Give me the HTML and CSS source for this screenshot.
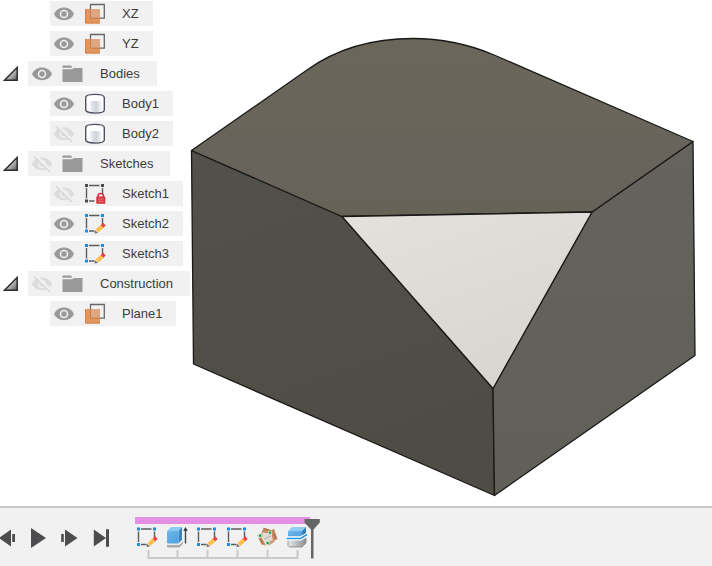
FILE: index.html
```html
<!DOCTYPE html>
<html lang="en">
<head>
<meta charset="utf-8">
<meta name="viewport" content="width=device-width, initial-scale=1">
<title>Model</title>
<link rel="stylesheet" href="styles.css">
</head>
<body>
<svg class="defs" width="0" height="0" aria-hidden="true">
  <defs>
    <linearGradient id="g-tri" x1="0" y1="0" x2="1" y2="1">
      <stop offset="0.3" stop-color="#f0f0f0"/><stop offset="1" stop-color="#555"/>
    </linearGradient>
    <linearGradient id="g-cyl">
      <stop offset="0" stop-color="#eef0f3"/><stop offset="0.5" stop-color="#cdd2da"/><stop offset="1" stop-color="#fbfbfc"/>
    </linearGradient>
    <linearGradient id="g-blue" x1="0" y1="0" x2="1" y2="1">
      <stop offset="0" stop-color="#6fb8ea"/><stop offset="1" stop-color="#4d9fdc"/>
    </linearGradient>
    <linearGradient id="g-steel">
      <stop offset="0" stop-color="#e6e7e8"/><stop offset="1" stop-color="#8d9194"/>
    </linearGradient>
    <symbol id="tri" viewBox="0 0 16 16">
      <path d="M1.500 14.200 14.200 1.500V14.200Z" fill="url(#g-tri)" stroke="#2c2c2c" stroke-width="1.500"/>
    </symbol>
    <symbol id="eye" viewBox="0 0 20 21">
      <path d="M0 11C2 6.800 5.500 4.500 10 4.500S18 6.800 20 11C18 15.200 14.500 17.200 10 17.200S2 15.200 0 11Z" fill="#999"/>
      <circle cx="10" cy="11" r="4.300" fill="#f0f0f0"/><circle cx="10" cy="11" r="2.700" fill="#999"/>
    </symbol>
    <symbol id="eye-off" viewBox="0 0 20 21">
      <path d="M0 11C2 6.800 5.500 4.500 10 4.500S18 6.800 20 11C18 15.200 14.500 17.200 10 17.200S2 15.200 0 11Z" fill="#dcdcdc"/>
      <circle cx="10" cy="11" r="4.300" fill="#f0f0f0"/><circle cx="10" cy="11" r="2.500" fill="#dcdcdc"/>
      <path d="M3.500 2.500 19.500 18" stroke="#f0f0f0" stroke-width="2.500"/>
      <path d="M2 3.500 18 19" stroke="#d8d8d8" stroke-width="1.700"/>
    </symbol>
    <symbol id="folder" viewBox="0 0 22 21">
      <path d="M0.500 2.500H9L10.500 4.800H0.500ZM0.500 6.300H10L12 5H20.500V19H0.500Z" fill="#999"/>
    </symbol>
    <symbol id="plane" viewBox="0 0 22 21">
      <path d="M1 6H16V20.500H1Z" fill="#e3955e"/>
      <path d="M1.500 6V20H15.500" fill="none" stroke="#cf8149"/>
      <path d="M7 6H16V15H7Z" fill="#dfa682"/>
      <path d="M6.500 6V1.500H20.300V15.200H16" fill="none" stroke="#666" stroke-width="1.300"/>
      <path d="M6.500 6V15.200H16" fill="none" stroke="#bd7748" stroke-width="0.800"/>
    </symbol>
    <symbol id="body" viewBox="0 0 22 21">
      <path d="M1.700 4.500C1.700 0.300 20.300 0.300 20.300 4.500V17C20.300 21 1.700 21 1.700 17Z" fill="#fff" stroke="#4c525f" stroke-width="1.400"/>
      <path d="M6 8H18V18.600Q12 19.600 6 18.800Z" fill="url(#g-cyl)"/>
    </symbol>
    <symbol id="frame" viewBox="0 0 22 21">
      <path d="M5 2.500H15.500M2.500 5V15.500M5 18H10.500M18.500 5V11" fill="none" stroke="#5c5c5c" stroke-width="1.400"/>
    </symbol>
    <symbol id="sketch" viewBox="0 0 22 21">
      <use href="#frame" width="22" height="21"/>
      <path d="M1 1H4V4H1ZM17 1H20V4H17ZM1 16.500H4V19.500H1Z" fill="#168ee8"/>
      <path d="M13 18 18.200 13.200" stroke="#fbbf4c" stroke-width="4.200"/>
      <path d="M18 13.400 20.500 11.100" stroke="#f23c48" stroke-width="3.600"/>
      <path d="M10.400 20.600 11.200 17.200 14 20Z" fill="#747474"/>
    </symbol>
    <symbol id="sketch-lock" viewBox="0 0 22 21">
      <use href="#frame" width="22" height="21"/>
      <path d="M1 1H4V4H1ZM17 1H20V4H17ZM1 16.500H4V19.500H1Z" fill="#4a4a4a"/>
      <path d="M14.200 14V12.500C14.200 9.800 19.400 9.800 19.400 12.500V14" fill="none" stroke="#d2333d" stroke-width="1.700"/>
      <rect x="12.300" y="13.400" width="9" height="7.400" rx="0.600" fill="#d2333d"/>
      <path d="M14 16H19.700M14 18.300H19.700" stroke="#e98186"/>
    </symbol>
    <symbol id="extrude" viewBox="0 0 22 22">
      <path d="M1 18.500H13L17 15V17.500L13.500 21.500H1Z" fill="#aaa"/><path d="M1.500 18.500H13.500L16.500 15.500" stroke="#eee" fill="none"/>
      <path d="M1 5 5 1H16L12.500 5Z" fill="#8bcaf2"/>
      <path d="M12.500 5 16 1V13.500L12.500 17.500Z" fill="#3985bf"/>
      <rect x="1" y="5" width="11.500" height="12.500" rx="1" fill="url(#g-blue)"/>
      <path d="M19.500 17.500V3" stroke="#444" stroke-width="1.400"/><path d="M17.300 4.800 19.500 1 21.700 4.800Z" fill="#333"/>
    </symbol>
    <symbol id="pattern" viewBox="0 0 22 22">
      <path d="M5.500 6.500 7.500 1.500 16.500 4.500 15 8ZM15.500 4.500 18 2.500 21.500 13 16.500 15.500ZM1 9.500 6 7 8.500 10 4 12ZM2.500 12.500 5.500 11 10 19.500 5.500 18.500Z" fill="#c98b62"/>
      <path d="M8 2.500 17 5.500M17 7 20 13M4 13 7 18" stroke="#9d6541"/>
      <path d="M6 9 15 7 17 14.500 9 17Z" fill="#ddd9d3"/><path d="M8 13 15 10" stroke="#b9b3ac"/>
      <path d="M10 16.500 17 14 19 15.500 13 19.500Z" fill="#d29a74"/>
      <path d="M2.500 8H5.700V11.200H2.500ZM12.500 5H15.700V8.200H12.500ZM10 15.500H13.200V18.700H10Z" fill="#16a34a" stroke="#e8f3e8" stroke-width="0.700"/>
    </symbol>
    <symbol id="split" viewBox="0 0 22 22">
      <path d="M2 12H15L20 9V17L16 21H3.500L2 19.500Z" fill="url(#g-steel)" stroke="#777" stroke-width="0.700"/>
      <path d="M2 5 6 1H20L16 5Z" fill="#91cdf2"/>
      <path d="M16 5 20 1V8L16 11Z" fill="#347fb7"/>
      <path d="M2 5H16V10.500H2Z" fill="url(#g-blue)"/>
      <path d="M0 12.500H14.500L21.500 8.500" fill="none" stroke="#fff" stroke-width="4"/>
      <path d="M0.500 12.500H14.500L21 8.500" fill="none" stroke="#2297e8" stroke-width="1.500"/>
    </symbol>
  </defs>
</svg>

<main class="workspace">
  <nav class="browser" aria-label="Browser">
    <ul class="tree">
      <li class="row child"><div class="item"><button aria-label="Toggle XZ"><svg class="eye"><use href="#eye"/></svg></button><svg class="icon"><use href="#plane"/></svg><span>XZ</span></div></li>
      <li class="row child"><div class="item"><button aria-label="Toggle YZ"><svg class="eye"><use href="#eye"/></svg></button><svg class="icon"><use href="#plane"/></svg><span>YZ</span></div></li>
      <li class="row"><button class="expander" aria-label="Collapse Bodies"><svg class="tri"><use href="#tri"/></svg></button><div class="item group"><button aria-label="Toggle Bodies"><svg class="eye"><use href="#eye"/></svg></button><svg class="icon"><use href="#folder"/></svg><span>Bodies</span></div></li>
      <li class="row child"><div class="item"><button aria-label="Toggle Body1"><svg class="eye"><use href="#eye"/></svg></button><svg class="icon"><use href="#body"/></svg><span>Body1</span></div></li>
      <li class="row child"><div class="item"><button aria-label="Toggle Body2"><svg class="eye"><use href="#eye-off"/></svg></button><svg class="icon"><use href="#body"/></svg><span>Body2</span></div></li>
      <li class="row"><button class="expander" aria-label="Collapse Sketches"><svg class="tri"><use href="#tri"/></svg></button><div class="item group"><button aria-label="Toggle Sketches"><svg class="eye"><use href="#eye-off"/></svg></button><svg class="icon"><use href="#folder"/></svg><span>Sketches</span></div></li>
      <li class="row child"><div class="item"><button aria-label="Toggle Sketch1"><svg class="eye"><use href="#eye-off"/></svg></button><svg class="icon"><use href="#sketch-lock"/></svg><span>Sketch1</span></div></li>
      <li class="row child"><div class="item"><button aria-label="Toggle Sketch2"><svg class="eye"><use href="#eye"/></svg></button><svg class="icon"><use href="#sketch"/></svg><span>Sketch2</span></div></li>
      <li class="row child"><div class="item"><button aria-label="Toggle Sketch3"><svg class="eye"><use href="#eye"/></svg></button><svg class="icon"><use href="#sketch"/></svg><span>Sketch3</span></div></li>
      <li class="row"><button class="expander" aria-label="Collapse Construction"><svg class="tri"><use href="#tri"/></svg></button><div class="item group"><button aria-label="Toggle Construction"><svg class="eye"><use href="#eye-off"/></svg></button><svg class="icon"><use href="#folder"/></svg><span>Construction</span></div></li>
      <li class="row child"><div class="item"><button aria-label="Toggle Plane1"><svg class="eye"><use href="#eye"/></svg></button><svg class="icon"><use href="#plane"/></svg><span>Plane1</span></div></li>
    </ul>
  </nav>
  <svg class="model" viewBox="190 0 522 506" preserveAspectRatio="xMinYMin meet" role="img" aria-label="Solid body with a chamfered corner">
    <defs>
      <linearGradient id="m-top" x1="0" y1="0" x2="0" y2="1">
        <stop offset="0" stop-color="#6a665a"/><stop offset="0.480" stop-color="#69655a"/><stop offset="0.600" stop-color="#68635b"/><stop offset="0.900" stop-color="#68635a"/><stop offset="1" stop-color="#676255"/>
      </linearGradient>
      <linearGradient id="m-left" x1="0" y1="0" x2="0.300" y2="1">
        <stop offset="0" stop-color="#51504a"/><stop offset="0.700" stop-color="#504e47"/><stop offset="0.850" stop-color="#504c46"/><stop offset="1" stop-color="#4e4c45"/>
      </linearGradient>
      <linearGradient id="m-right" x1="0" y1="0" x2="0" y2="1">
        <stop offset="0" stop-color="#64635d"/><stop offset="1" stop-color="#605f58"/>
      </linearGradient>
      <linearGradient id="m-cut" x1="0" y1="0" x2="0.500" y2="1">
        <stop offset="0" stop-color="#e4e1dd"/><stop offset="1" stop-color="#d8d6d1"/>
      </linearGradient>
    </defs>
    <g stroke="#191917" stroke-width="1.300" stroke-linejoin="round">
      <path d="M191.500 150.500 342 216.500 493 388.500 494.500 495.500 193.500 364Z" fill="url(#m-left)"/>
      <path d="M693 141.500 592 212 493 388.500 494.500 495.500 695 355.500Z" fill="url(#m-right)"/>
      <path d="M191.500 150.500 307 70C342 45 380 38.500 413 38.500C443 38.500 470 45 493 54.500L693 141.500 592 212 342 216.500Z" fill="url(#m-top)"/>
      <path d="M342 216.500 592 212 493 388.500Z" fill="url(#m-cut)"/>
    </g>
  </svg>
</main>

<footer class="bar">
  <div class="controls">
    <button aria-label="Step back"><svg width="22" height="24" viewBox="0 0 22 24"><path d="M-1 13 11 4.500V21.500ZM12.200 9H15V17H12.200Z" fill="#4d4d4f"/></svg></button>
    <button aria-label="Play"><svg width="32" height="24" viewBox="22 0 32 24"><path d="M31 3 46 13 31 23Z" fill="#4d4d4f"/></svg></button>
    <button aria-label="Step forward"><svg width="32" height="24" viewBox="54 0 32 24"><path d="M61.200 9H63.800V17H61.200ZM65 4.500 77.500 13 65 21.500Z" fill="#4d4d4f"/></svg></button>
    <button aria-label="Go to end"><svg width="32" height="24" viewBox="86 0 32 24"><path d="M93.800 4.500 106 13 93.800 21.500ZM106 4.200H109V21.800H106Z" fill="#4d4d4f"/></svg></button>
  </div>
  <div class="timeline">
    <div class="range"></div>
    <div class="features">
      <button aria-label="Sketch1"><svg class="feature"><use href="#sketch"/></svg></button>
      <button aria-label="Extrude"><svg class="feature"><use href="#extrude"/></svg></button>
      <button aria-label="Sketch2"><svg class="feature"><use href="#sketch"/></svg></button>
      <button aria-label="Sketch3"><svg class="feature"><use href="#sketch"/></svg></button>
      <button aria-label="Plane1"><svg class="feature"><use href="#pattern"/></svg></button>
      <button aria-label="Split body"><svg class="feature"><use href="#split"/></svg></button>
    </div>
    <svg class="bracket" width="175" height="9" viewBox="0 0 175 9" aria-hidden="true"><path d="M13.500 0V8H162.500V0M42.500 0V8M72.500 0V8M102.500 0V8M132.500 0V8" fill="none" stroke="#cacaca" stroke-width="2"/></svg>
    <svg class="marker" width="17" height="41" viewBox="0 0 17 41" aria-hidden="true"><path d="M0.500 1H15.800V4.500L9.500 11.500V40.500H7V11.500L0.500 4.500Z" fill="#666"/></svg>
  </div>
</footer>
</body>
</html>
```
FILE: styles.css
```css
* {
  box-sizing: border-box;
}

body {
  margin: 0;
  min-height: 100vh;
  display: flex;
  flex-direction: column;
  background: #fff;
  color: #3c3c3c;
  font: 13px/25px "Liberation Sans", Arial, sans-serif;
}

svg {
  display: block;
  flex: none;
}

button {
  padding: 0;
  border: 0;
  background: none;
  cursor: pointer;
}

.defs {
  position: absolute;
}

.workspace {
  flex: 1;
  display: grid;
  grid-template-columns: 190px 1fr;
  align-items: start;
}

.tree {
  margin: 0;
  padding: 1px 0 0;
  list-style: none;
  display: flex;
  flex-direction: column;
  gap: 5px;
}

.row {
  display: flex;
  align-items: center;
  padding-left: 3px;
  gap: 9px;
}

.child {
  padding-left: 50px;
}

.item {
  display: flex;
  align-items: center;
  height: 25px;
  padding: 0 14px 0 4px;
  background: #f1f1f1;
}

.group {
  padding-right: 17px;
}

.item span {
  margin-left: 16px;
}

.eye {
  width: 20px;
  height: 21px;
}

.icon {
  width: 22px;
  height: 21px;
  margin-left: 10px;
}

.tri {
  width: 16px;
  height: 16px;
}

.model {
  width: 100%;
  height: auto;
}

.bar {
  display: flex;
  align-items: center;
  gap: 17px;
  border-top: 2px solid #c9c9c9;
  background: #f1f1f1;
}

.controls {
  display: flex;
}

.timeline {
  position: relative;
  padding: 9px 0 7px;
}

.range {
  width: 175px;
  height: 7px;
  background: #e38fe4;
}

.features {
  display: flex;
  gap: 8px;
  padding: 2px 1px;
}

.feature {
  width: 22px;
  height: 22px;
}

.marker {
  position: absolute;
  top: 10px;
  left: 169px;
}
```
